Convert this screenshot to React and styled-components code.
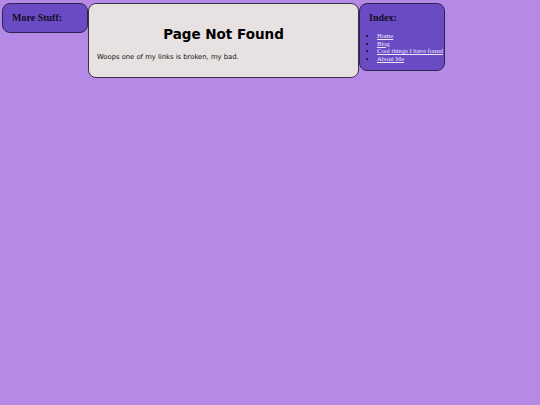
import React from "react";
import styled, { createGlobalStyle } from "styled-components";

const Global = createGlobalStyle`
  html, body { margin: 0; padding: 0; }
  body {
    background: #b48ae6;
    min-height: 405px;
    font-family: "DejaVu Sans", Verdana, sans-serif;
  }
`;

const Layout = styled.div`
  display: flex;
  align-items: flex-start;
  padding: 3px 0 0 2px;
`;

const SideBox = styled.aside`
  box-sizing: border-box;
  width: 86px;
  background: #6a4bc4;
  border: 1px solid #2e2450;
  border-radius: 8px;
  padding: 8px 8px ${(p) => p.$bottom || 8}px 9px;
  font-family: "Liberation Serif", "Times New Roman", serif;
`;

const SideTitle = styled.h2`
  margin: 0;
  font-size: 10px;
  line-height: 11.5px;
  font-weight: bold;
  color: #140c26;
`;

const MainBox = styled.main`
  box-sizing: border-box;
  width: 271px;
  background: #e7e1e2;
  border: 1px solid #3a3048;
  border-radius: 8px;
  padding: 22.5px 8px 15.5px 8px;
`;

const Title = styled.h1`
  margin: 0 0 11.5px;
  text-align: center;
  font-size: 13.5px;
  line-height: 15.7px;
  font-weight: bold;
  color: #000;
`;

const Text = styled.p`
  margin: 0;
  font-size: 6.8px;
  line-height: 7.9px;
  color: #111;
`;

const LinkList = styled.ul`
  margin: 8.5px 0 0;
  padding-left: 8px;
  list-style: disc;
  font-size: 6.65px;
  line-height: 7.7px;
  color: #140c26;
`;

const LinkItem = styled.li`
  white-space: nowrap;
`;

const Link = styled.a`
  color: #ece6ff;
  text-decoration: underline;
`;

export default function App() {
  return (
    <>
      <Global />
      <Layout>
        <SideBox>
          <SideTitle>More Stuff:</SideTitle>
        </SideBox>
        <MainBox>
          <Title>Page Not Found</Title>
          <Text>Woops one of my links is broken, my bad.</Text>
        </MainBox>
        <SideBox $bottom={7}>
          <SideTitle>Index:</SideTitle>
          <LinkList>
            <LinkItem><Link href="#">Home</Link></LinkItem>
            <LinkItem><Link href="#">Blog</Link></LinkItem>
            <LinkItem><Link href="#">Cool things I have found</Link></LinkItem>
            <LinkItem><Link href="#">About Me</Link></LinkItem>
          </LinkList>
        </SideBox>
      </Layout>
    </>
  );
}
